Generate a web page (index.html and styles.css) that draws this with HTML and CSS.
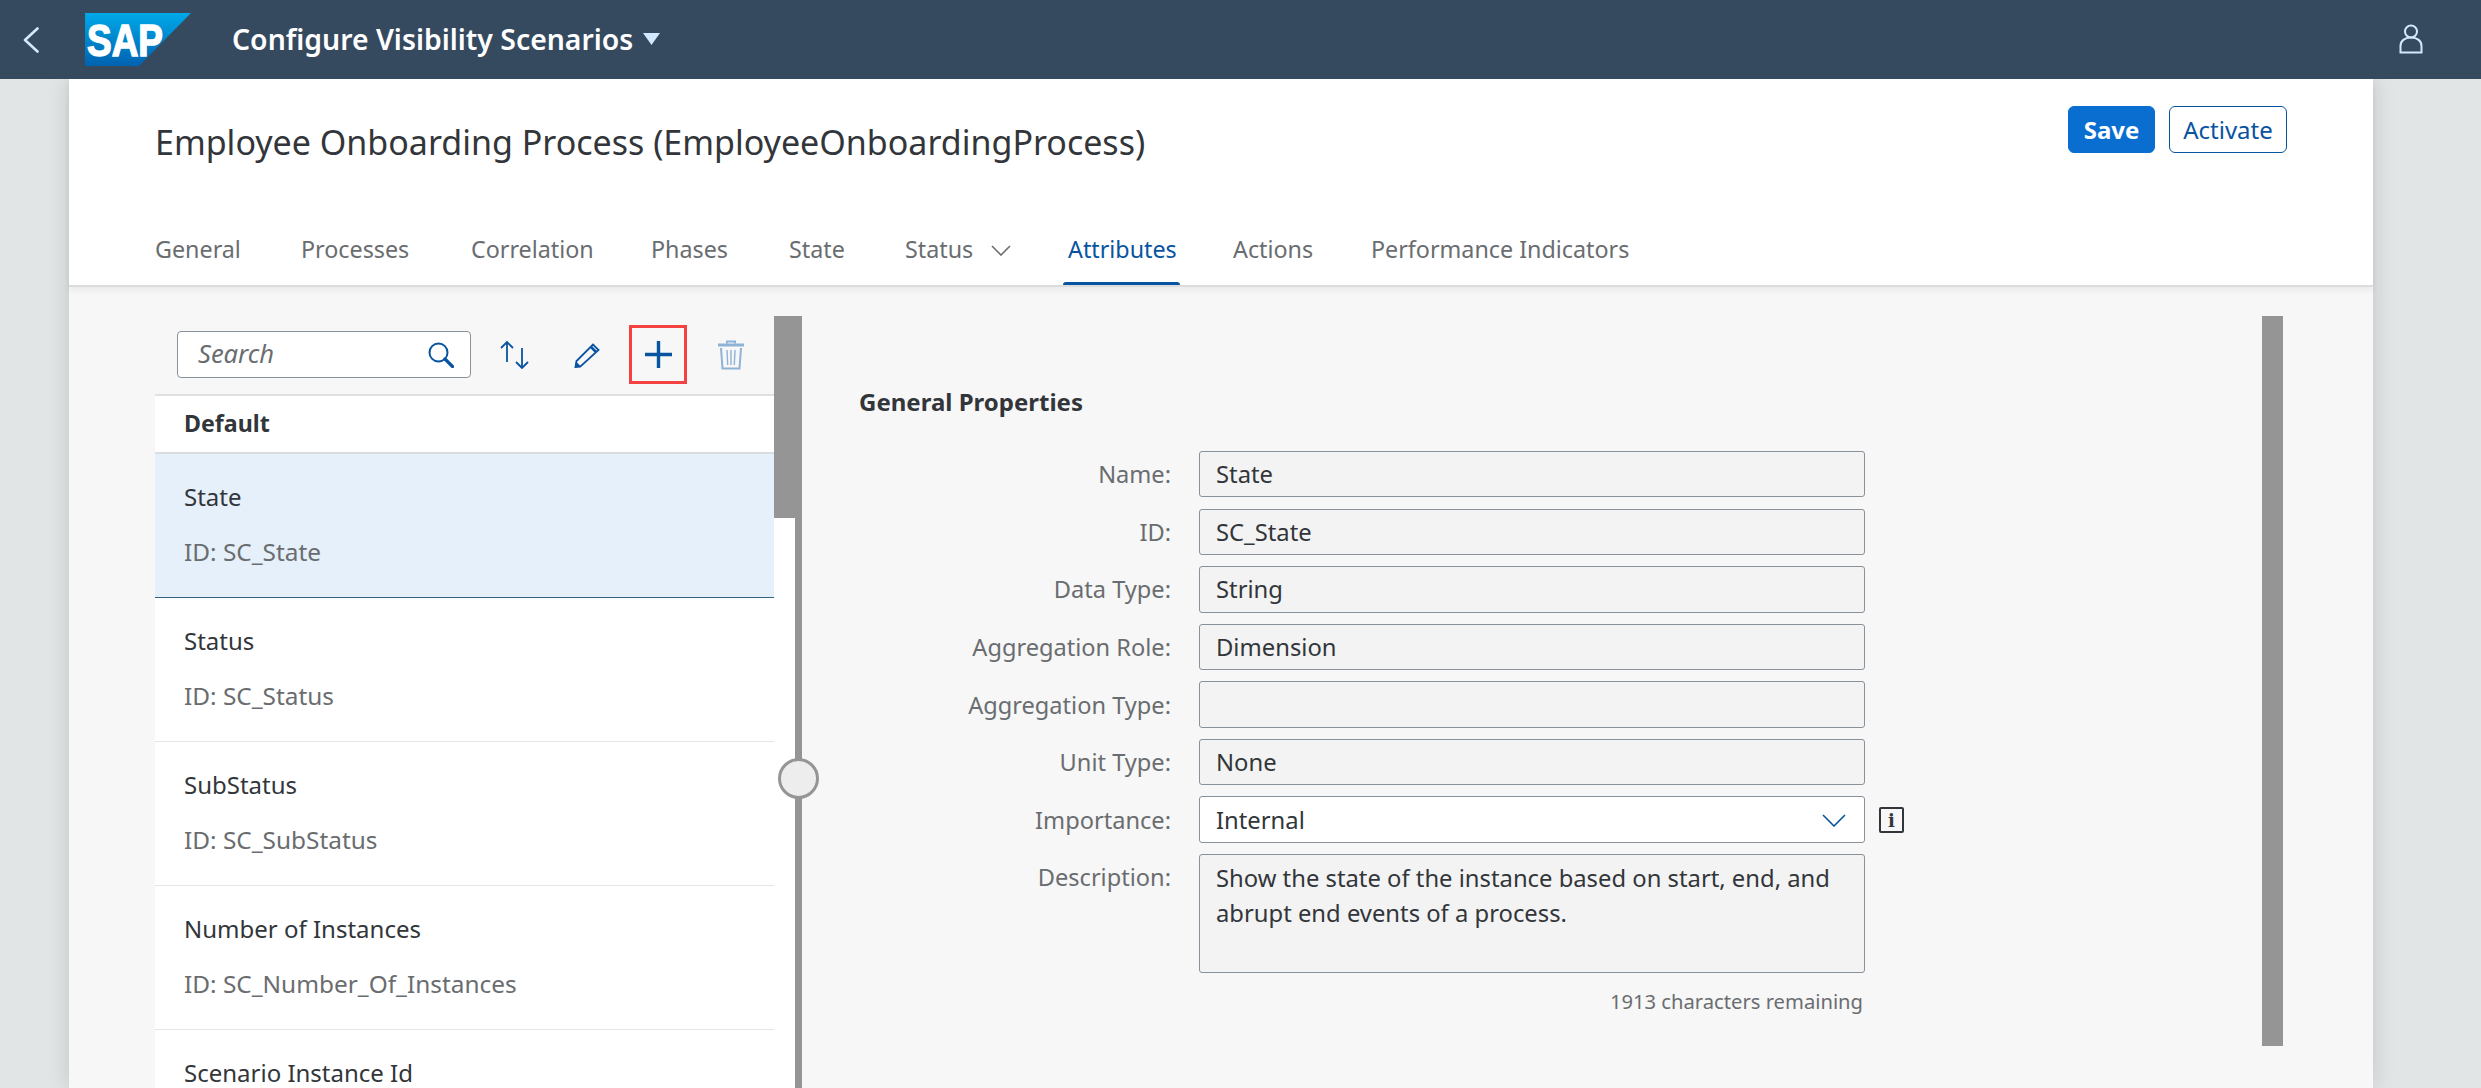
FILE: index.html
```html
<!DOCTYPE html>
<html lang="en">
<head>
<meta charset="utf-8">
<title>Configure Visibility Scenarios</title>
<link rel="stylesheet" href="styles.css">
</head>
<body>
<div class="shell">
  <header class="topbar">
    <svg class="back" width="16" height="26" viewBox="0 0 16 26"><path d="M14.5 1.5 2 13l12.5 11.5" fill="none" stroke="#d1e8ff" stroke-width="2.6" stroke-linecap="round" stroke-linejoin="round"/></svg>
    <svg class="logo" width="106" height="53" viewBox="0 0 106 53">
      <defs><linearGradient id="sapg" x1="0" y1="0" x2="0" y2="1"><stop offset="0" stop-color="#00a9e9"/><stop offset="1" stop-color="#0062b0"/></linearGradient></defs>
      <path d="M0 0h106L54 53H0z" fill="url(#sapg)"/>
      <text class="logo-text" x="2" y="43" textLength="76" lengthAdjust="spacingAndGlyphs">SAP</text>
    </svg>
    <span class="app-title">Configure Visibility Scenarios</span>
    <svg class="caret" width="17" height="12" viewBox="0 0 17 12"><path d="M0 0h17L8.500 12z" fill="#d1e8ff"/></svg>
    <svg class="user" width="24" height="30" viewBox="0 0 24 30"><g fill="none" stroke="#d1e8ff" stroke-width="2"><circle cx="12" cy="7.500" r="6"/><path d="M1.500 28.500V22c0-5 4-8.500 10.500-8.500S22.500 17 22.500 22v6.500z"/></g></svg>
  </header>
  <div class="page">
    <main class="card">
      <section class="head">
        <div class="title-row">
          <h1 class="title">Employee Onboarding Process (EmployeeOnboardingProcess)</h1>
          <div class="actions">
            <button class="btn btn-primary">Save</button>
            <button class="btn btn-ghost">Activate</button>
          </div>
        </div>
        <nav class="tabs">
          <a class="tab tab-general">General</a>
          <a class="tab tab-processes">Processes</a>
          <a class="tab tab-correlation">Correlation</a>
          <a class="tab tab-phases">Phases</a>
          <a class="tab tab-state">State</a>
          <a class="tab tab-status">Status
            <svg class="tab-chev" width="20" height="11" viewBox="0 0 20 11"><path d="M1 1l9 9 9-9" fill="none" stroke="#6a6d70" stroke-width="1.600"/></svg>
          </a>
          <a class="tab tab-active">Attributes</a>
          <a class="tab tab-actions">Actions</a>
          <a class="tab">Performance Indicators</a>
        </nav>
      </section>
      <section class="content">
        <aside class="master">
          <div class="list-col">
            <div class="toolbar">
              <div class="search">
                <span class="search-text">Search</span>
                <svg width="26" height="26" viewBox="0 0 26 26"><g fill="none" stroke="#0854a0"><circle cx="10.500" cy="10.500" r="9" stroke-width="2"/><path d="M17 17l7.500 7.500" stroke-width="3.200" stroke-linecap="round"/></g></svg>
              </div>
              <svg class="tool tool-sort" width="31" height="30" viewBox="0 0 31 30"><g fill="none" stroke="#0854a0" stroke-width="1.800"><path d="M8 22V2M2 8l6-6 6 6"/><path d="M23 8v20M17 22l6 6 6-6"/></g></svg>
              <svg class="tool tool-edit" width="27" height="26" viewBox="0 0 27 26"><g fill="none" stroke="#0854a0" stroke-width="1.800"><path d="M6.500 24.500 1.500 25l1-6L19 2.500l5.500 5.500z"/><path d="M17 5l5 5" stroke-width="2.500"/></g><path d="M1 25.500l1-6 5 5z" fill="#0854a0"/></svg>
              <div class="add-box">
                <svg width="27" height="27" viewBox="0 0 27 27"><path d="M13.500 0v27M0 13.500h27" stroke="#0854a0" stroke-width="3.400"/></svg>
              </div>
              <svg class="tool tool-trash" width="26" height="30" viewBox="0 0 26 30"><g fill="none" stroke="#8fb3d6"><path d="M0 5h26" stroke-width="3"/><path d="M9 3.500V1.500h8v2" stroke-width="2"/><path d="M3 8l1.500 20.500h17L23 8" stroke-width="2"/><path d="M9 10l.7 15M13 10v15M17 10l-.7 15" stroke-width="1.400"/></g></svg>
            </div>
            <div class="group-head">Default</div>
            <div class="row row-selected"><div class="row-name">State</div><div class="row-id">ID: SC_State</div></div>
            <div class="row"><div class="row-name">Status</div><div class="row-id">ID: SC_Status</div></div>
            <div class="row"><div class="row-name">SubStatus</div><div class="row-id">ID: SC_SubStatus</div></div>
            <div class="row"><div class="row-name">Number of Instances</div><div class="row-id">ID: SC_Number_Of_Instances</div></div>
            <div class="row row-last"><div class="row-name">Scenario Instance Id</div></div>
          </div>
          <div class="list-scroll"><div class="list-thumb"></div></div>
        </aside>
        <div class="splitter"><div class="splitter-handle"></div></div>
        <div class="detail">
          <div class="detail-main">
            <h2 class="section-title">General Properties</h2>
            <div class="form">
              <label class="label">Name:</label><div class="field">State</div><span></span>
              <label class="label">ID:</label><div class="field">SC_State</div><span></span>
              <label class="label">Data Type:</label><div class="field">String</div><span></span>
              <label class="label">Aggregation Role:</label><div class="field">Dimension</div><span></span>
              <label class="label">Aggregation Type:</label><div class="field"></div><span></span>
              <label class="label">Unit Type:</label><div class="field">None</div><span></span>
              <label class="label">Importance:</label>
              <div class="field field-select">Internal
                <svg width="24" height="13" viewBox="0 0 24 13"><path d="M1 1l11 11L23 1" fill="none" stroke="#0854a0" stroke-width="1.600"/></svg>
              </div>
              <svg class="info" width="25" height="26" viewBox="0 0 25 26"><rect x="1" y="1" width="23" height="24" rx="1" fill="none" stroke="#32363a" stroke-width="2"/><text class="info-i" x="12.500" y="20" text-anchor="middle">i</text></svg>
              <label class="label label-top">Description:</label>
              <div class="field field-area">Show the state of the instance based on start, end, and abrupt end events of a process.</div><span></span>
              <span></span><div class="counter">1913 characters remaining</div><span></span>
            </div>
          </div>
          <div class="detail-scroll"></div>
        </div>
      </section>
    </main>
  </div>
</div>
</body>
</html>
```
FILE: styles.css
```css
* { box-sizing: border-box; }
html, body { margin: 0; padding: 0; height: 100%; overflow: hidden; }
body { font-family: "Noto Sans", "Open Sans", sans-serif; font-size: 23.6px; color: #32363a; background: #e1e5e6; }
.shell { height: 1088px; display: flex; flex-direction: column; overflow: hidden; }

.topbar { height: 79px; flex: none; background: #354a5f; display: flex; align-items: center; padding-left: 23px; position: relative; z-index: 2; }
.logo { margin-left: 46px; flex: none; }
.logo-text { font-family: "Liberation Sans", sans-serif; font-weight: 700; font-size: 44px; fill: #fff; stroke: #fff; stroke-width: 1.5px; }
.app-title { margin-left: 41px; color: #fff; font-size: 28.400px; font-weight: 600; line-height: 79px; white-space: nowrap; }
.caret { margin-left: 10px; margin-top: -1px; }
.user { margin-left: auto; margin-right: 58px; margin-top: -1px; }

.page { flex: 1; min-height: 0; padding: 0 108px 0 69px; }
.card { height: 100%; display: flex; flex-direction: column; background: #f7f7f7; box-shadow: 0 0 22px rgba(0,0,0,.14); }

.head { height: 208px; flex: none; background: #fff; border-bottom: 2px solid #dcdcdc; box-shadow: 0 4px 6px rgba(0,0,0,.05); display: flex; flex-direction: column; padding: 27px 86px 0; position: relative; }
.title-row { height: 100px; flex: none; display: flex; justify-content: space-between; align-items: flex-start; }
.title { margin: 8px 0 0; font-size: 34px; font-weight: 400; line-height: 56px; color: #32363a; white-space: nowrap; }
.actions { display: flex; gap: 14px; }
.btn { height: 47px; border-radius: 6px; font-family: inherit; font-size: 24px; padding: 0; }
.btn-primary { width: 87px; background: #0a6ed1; border: 1px solid #0a6ed1; color: #fff; font-weight: 700; }
.btn-ghost { width: 118px; background: #fff; border: 1.600px solid #0854a0; color: #0854a0; }

.tabs { display: flex; height: 79px; margin-left: -5px; }
.tab { height: 79px; font-size: 23.300px; line-height: 45px; padding: 21px 5px 0; white-space: nowrap; color: #6a6d70; flex: none; display: flex; align-items: flex-start; }
.tab-general { width: 146px; }
.tab-processes { width: 170px; }
.tab-correlation { width: 180px; }
.tab-phases { width: 138px; }
.tab-state { width: 116px; }
.tab-status { width: 163px; gap: 18px; }
.tab-chev { margin-top: 18px; }
.tab-active { width: 117px; color: #0854a0; margin-right: 48px; position: relative; }
.tab-active::after { content: ""; position: absolute; left: 0; right: 0; bottom: 0; height: 3px; background: #0854a0; border-radius: 3px 3px 0 0; }
.tab-actions { width: 138px; }

.content { flex: 1; min-height: 0; display: flex; padding-top: 29px; }
.master { width: 640px; margin-left: 86px; flex: none; display: flex; }
.list-col { width: 619px; flex: none; }
.toolbar { height: 78px; display: flex; align-items: center; padding-left: 22px; padding-bottom: 1px; }
.search { width: 294px; height: 47px; background: #fff; border: 1.600px solid #89919a; border-radius: 4px; display: flex; align-items: center; justify-content: space-between; padding: 0 16px 0 20px; }
.search-text { font-size: 25.500px; line-height: 40px; margin-top: -3px; font-style: italic; color: #6a6d70; }
.tool { flex: none; }
.tool-sort { margin-left: 28px; }
.tool-edit { margin-left: 44px; }
.add-box { width: 58px; height: 59px; margin-left: 28px; border: 3px solid #f44242; display: flex; align-items: center; justify-content: center; flex: none; }
.tool-trash { margin-left: 31px; }
.group-head { height: 60px; background: #fff; border-top: 2px solid #e0e0e0; border-bottom: 2px solid #dcdcdc; padding-left: 29px; font-size: 23.200px; font-weight: 700; line-height: 54px; }
.row { height: 144px; background: #fff; border-bottom: 1.600px solid #e5e5e5; padding: 26px 29px 0; font-size: 24px; }
.row-selected { background: #e5f0fa; border-bottom-color: #35607f; }
.row-name { line-height: 34px; }
.row-id { line-height: 34px; margin-top: 21px; font-size: 24.400px; color: #6a6d70; }
.list-scroll { width: 21px; flex: none; background: #fff; }
.list-thumb { height: 202px; background: #959595; }

.splitter { width: 7px; flex: none; background: #959595; position: relative; }
.splitter-handle { position: absolute; left: -17px; top: 442px; width: 41px; height: 41px; border-radius: 50%; background: #ededed; border: 3px solid #959595; }

.detail { flex: 1; min-width: 0; display: flex; padding-right: 90px; }
.detail-main { flex: 1; min-width: 0; padding-left: 57px; }
.section-title { margin: 69px 0 0; font-size: 24px; font-weight: 700; line-height: 34px; color: #32363a; }
.form { display: grid; grid-template-columns: 312px 666px 40px; column-gap: 28px; row-gap: 11.200px; margin-top: 32px; }
.form > svg, .form > span { margin-left: -14px; }
.label { height: 46.400px; display: flex; align-items: center; justify-content: flex-end; color: #6a6d70; white-space: nowrap; }
.label-top { align-items: flex-start; line-height: 46px; }
.field { height: 46.400px; background: #f3f3f3; border: 1.600px solid #89919a; border-radius: 3px; padding: 0 16px; font-size: 23.800px; display: flex; align-items: center; }
.field-select { background: #fff; justify-content: space-between; padding-right: 18px; }
.field-select svg { margin-top: 2px; }
.field-area { display: block; height: 119px; padding: 6px 16px; line-height: 35px; }
.info { align-self: center; margin-top: 1px; }
.info-i { font-family: "DejaVu Serif", serif; font-weight: 700; font-size: 18px; fill: #32363a; }
.counter { margin-top: 2px; text-align: right; padding-right: 2px; font-size: 20.200px; line-height: 30px; color: #6a6d70; white-space: nowrap; }
.detail-scroll { width: 21px; height: 730px; flex: none; background: #959595; }
```
